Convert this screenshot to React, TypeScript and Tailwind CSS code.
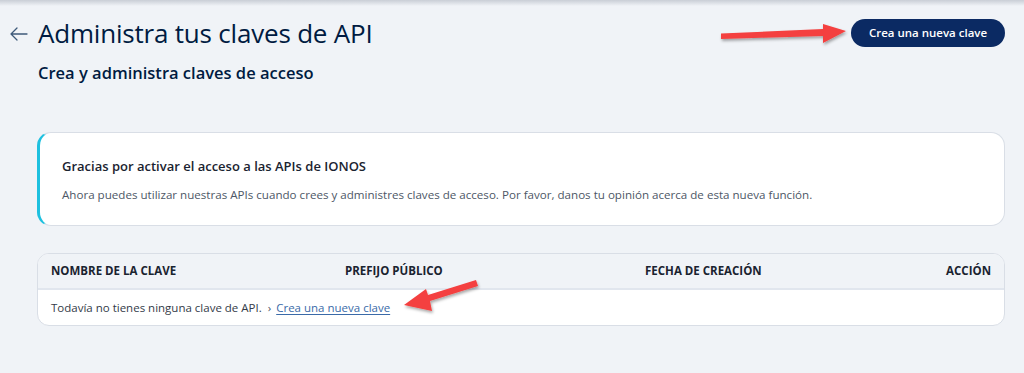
import React from "react";

export default function App() {
  return (
    <div
      className="relative w-[1024px] h-[373px] overflow-hidden bg-[#f0f3f7]"
      style={{ fontFamily: '"Open Sans", sans-serif' }}
    >
      <div className="absolute left-0 top-0 w-full h-[6px] bg-gradient-to-b from-[#c9ced6] to-[#f0f3f7]" />
      {/* header */}
      <div className="flex items-start justify-between pl-[10px] pr-[19px] pt-[17px]">
        <div className="flex flex-col">
          <div className="flex items-center gap-[10px]">
            <svg width="18" height="14" viewBox="0 0 18 14" className="mt-[2px]">
              <path d="M7 1 L1 7 L7 13 M1 7 H17" fill="none" stroke="#3e5a7a" strokeWidth="1.3" strokeLinecap="round" strokeLinejoin="round" />
            </svg>
            <h1 className="text-[26px] leading-[32px] text-[#001b41] tracking-[-0.2px]">Administra tus claves de API</h1>
          </div>
          <div className="pl-[28px] mt-[14px] text-[16.5px] leading-[20px] font-semibold text-[#001b41]">
            Crea y administra claves de acceso
          </div>
        </div>
        <button className="mt-[2px] h-[28px] w-[154px] rounded-full bg-[#0b2a63] text-white text-[11.5px] font-semibold">
          Crea una nueva clave
        </button>
      </div>

      <div className="pl-[37px] pr-[19px] mt-[49px] flex flex-col gap-[27px]">
        {/* info card */}
        <div className="h-[94px] rounded-[14px] bg-white border border-[#d9dee6] border-l-[3px] border-l-[#1ec0df] pl-[22px] pt-[24px]">
          <div className="text-[13px] leading-[18px] font-semibold text-[#1a2330]">
            Gracias por activar el acceso a las APIs de IONOS
          </div>
          <div className="mt-[12px] text-[11.6px] leading-[16px] text-[#4d5766]">
            Ahora puedes utilizar nuestras APIs cuando crees y administres claves de acceso. Por favor, danos tu opinión acerca de esta nueva función.
          </div>
        </div>

        {/* table card */}
        <div className="rounded-[12px] border border-[#d9dee6] bg-white overflow-hidden">
          <div className="grid grid-cols-[294px_300px_1fr_auto] items-center h-[36px] px-[13px] bg-[#f0f3f7] border-b-2 border-[#e1e6ee] text-[11.5px] font-bold text-[#1a2330]">
            <div>NOMBRE DE LA CLAVE</div>
            <div>PREFIJO PÚBLICO</div>
            <div>FECHA DE CREACIÓN</div>
            <div>ACCIÓN</div>
          </div>
          <div className="h-[35px] flex items-center px-[13px] text-[11.5px] text-[#333b48]">
            <span>Todavía no tienes ninguna clave de API.</span>
            <span className="ml-[6px] mr-[5px] text-[#4d5766]">›</span>
            <a className="underline text-[#3a6aa8] underline-offset-2">Crea una nueva clave</a>
          </div>
        </div>
      </div>

      {/* annotation arrows */}
      <svg className="absolute left-0 top-0 pointer-events-none" width="1024" height="373">
        <defs>
          <filter id="sh" x="-20%" y="-50%" width="140%" height="200%">
            <feDropShadow dx="1" dy="2" stdDeviation="1.5" floodColor="#000" floodOpacity="0.35" />
          </filter>
        </defs>
        <g filter="url(#sh)" fill="#f4403f">
          <path d="M721 33.5 L823 29 L823 24 L846 31 L823 43 L823 36 L721 39 Z" />
          <path d="M476 280 L428 295 L426 289 L404 305 L432 311 L430 301 L478 286 Z" />
        </g>
      </svg>
    </div>
  );
}
